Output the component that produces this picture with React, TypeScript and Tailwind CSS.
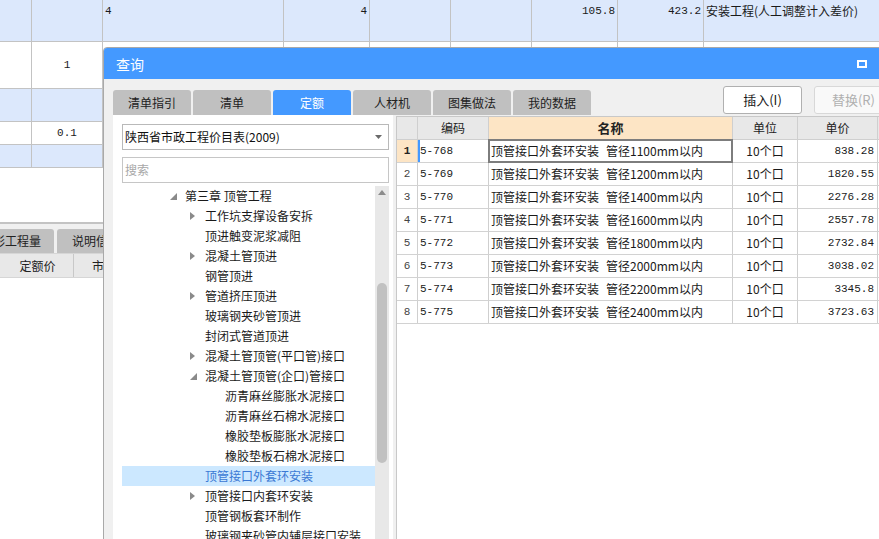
import React from 'react';

type Align = 'l' | 'r' | 'c';
type BgCell = { t?: string; a?: Align; mono?: boolean };

// background sheet column widths (border included)
const BG_COLS = [
  'w-[32px]',
  'w-[71px]',
  'w-[181px]',
  'w-[86px]',
  'w-[81px]',
  'w-[81px]',
  'w-[86px]',
  'w-[86px]',
  'flex-1',
];

const BG_ROWS: { h: string; blue: boolean; top?: boolean; cells: BgCell[] }[] = [
  {
    h: 'h-[42px]',
    blue: true,
    top: true,
    cells: [
      {},
      {},
      { t: '4', a: 'l', mono: true },
      { t: '4', a: 'r', mono: true },
      {},
      {},
      { t: '105.8', a: 'r', mono: true },
      { t: '423.2', a: 'r', mono: true },
      { t: '安装工程(人工调整计入差价)', a: 'l' },
    ],
  },
  { h: 'h-[47px]', blue: false, cells: [{}, { t: '1', a: 'c', mono: true }] },
  { h: 'h-[33px]', blue: true, cells: [{}, {}] },
  { h: 'h-[23px]', blue: false, cells: [{}, { t: '0.1', a: 'c', mono: true }] },
  { h: 'h-[23px]', blue: true, cells: [{}, {}] },
];

const TABS = ['清单指引', '清单', '定额', '人材机', '图集做法', '我的数据'];

type Node = { label: string; level: 0 | 1 | 2; icon?: 'open' | 'closed'; selected?: boolean };

const TREE: Node[] = [
  { label: '第三章 顶管工程', level: 0, icon: 'open' },
  { label: '工作坑支撑设备安拆', level: 1, icon: 'closed' },
  { label: '顶进触变泥浆减阻', level: 1 },
  { label: '混凝土管顶进', level: 1, icon: 'closed' },
  { label: '钢管顶进', level: 1 },
  { label: '管道挤压顶进', level: 1, icon: 'closed' },
  { label: '玻璃钢夹砂管顶进', level: 1 },
  { label: '封闭式管道顶进', level: 1 },
  { label: '混凝土管顶管(平口管)接口', level: 1, icon: 'closed' },
  { label: '混凝土管顶管(企口)管接口', level: 1, icon: 'open' },
  { label: '沥青麻丝膨胀水泥接口', level: 2 },
  { label: '沥青麻丝石棉水泥接口', level: 2 },
  { label: '橡胶垫板膨胀水泥接口', level: 2 },
  { label: '橡胶垫板石棉水泥接口', level: 2 },
  { label: '顶管接口外套环安装', level: 1, selected: true },
  { label: '顶管接口内套环安装', level: 1, icon: 'closed' },
  { label: '顶管钢板套环制作', level: 1 },
  { label: '玻璃钢夹砂管内辅层接口安装', level: 1 },
];

const INDENT = ['pl-[48px]', 'pl-[68px]', 'pl-[88px]'];

const ROWS = [
  ['5-768', '1100', '838.28'],
  ['5-769', '1200', '1820.55'],
  ['5-770', '1400', '2276.28'],
  ['5-771', '1600', '2557.78'],
  ['5-772', '1800', '2732.84'],
  ['5-773', '2000', '3038.02'],
  ['5-774', '2200', '3345.8'],
  ['5-775', '2400', '3723.63'],
];

const MONO = "font-['Liberation_Mono',monospace] text-[11px]";

function Sheet() {
  return (
    <div className="flex flex-col">
      {BG_ROWS.map((row, ri) => (
        <div key={ri} className={`flex ${row.h} ${row.blue ? 'bg-[#dce8fc]' : 'bg-white'}`}>
          {BG_COLS.map((w, ci) => {
            const c = row.cells[ci];
            const show = c && c.t;
            return (
              <div
                key={ci}
                className={`${w} shrink-0 border-r border-b border-[#c3c3c3] flex ${
                  row.top ? 'items-start pt-[4px]' : 'items-center'
                } ${c?.a === 'r' ? 'justify-end pr-[2px]' : c?.a === 'c' ? 'justify-center' : 'pl-[2px]'} ${
                  ci === 8 ? 'border-r-0' : ''
                }`}
              >
                {show && (
                  <span className={`${c.mono ? MONO : 'text-[12px]'} leading-[14px] text-[#1a1a1a] whitespace-nowrap`}>
                    {c.t}
                  </span>
                )}
              </div>
            );
          })}
        </div>
      ))}
      <div className="h-[54px] bg-white" />
      <div className="h-[2px] bg-[#c3c3c3]" />
      <div className="h-[5px] bg-[#f0f0f0]" />
      <div className="flex h-[24px] bg-[#f0f0f0]">
        <div className="w-[54px] overflow-hidden flex justify-end items-center pr-[13px] bg-[#c0c0c0] rounded-tr-[3px]">
          <span className="text-[12px] whitespace-nowrap text-[#222]">反查图形工程量</span>
        </div>
        <div className="ml-[3px] w-[110px] flex items-center pl-[15px] bg-[#c0c0c0] rounded-t-[3px]">
          <span className="text-[12px] whitespace-nowrap text-[#222]">说明信息</span>
        </div>
      </div>
      <div className="flex h-[25px] bg-[#e8e8e8] border-t border-[#d6d6d6] border-b">
        <div className="w-[74px] border-r border-[#c8c8c8] flex items-center justify-center pl-[2px]">
          <span className="text-[12px] text-[#222]">定额价</span>
        </div>
        <div className="flex items-center pl-[18px]">
          <span className="text-[12px] text-[#222]">市场价</span>
        </div>
      </div>
    </div>
  );
}

function Tri({ kind }: { kind?: 'open' | 'closed' }) {
  if (kind === 'closed')
    return (
      <svg width="5" height="8" viewBox="0 0 5 8">
        <path d="M0 0 L5 4 L0 8 Z" fill="#8a8a8a" />
      </svg>
    );
  if (kind === 'open')
    return (
      <svg width="7" height="7" viewBox="0 0 7 7">
        <path d="M7 0 L7 7 L0 7 Z" fill="#8a8a8a" />
      </svg>
    );
  return null;
}

function TreePanel() {
  return (
    <div className="w-[280px] shrink-0 bg-white flex flex-col pl-[9px] pr-[4px] pt-[9px]">
      <div className="h-[26px] border border-[#b9b9b9] flex items-center pl-[2px] pr-[6px]">
        <span className="text-[12px] text-[#111] leading-[16px] whitespace-nowrap">陕西省市政工程价目表(2009)</span>
        <svg className="ml-auto" width="7" height="4" viewBox="0 0 7 4">
          <path d="M0 0 L7 0 L3.5 4 Z" fill="#6a6a6a" />
        </svg>
      </div>
      <div className="mt-[7px] h-[26px] border border-[#c6c6c6] flex items-center pl-[2px]">
        <span className="text-[12px] text-[#a8a8a8] leading-[16px]">搜索</span>
      </div>
      <div className="mt-[3px] flex flex-1">
        <div className="flex-1 flex flex-col">
          {TREE.map((n, i) => (
            <div
              key={i}
              className={`h-[20px] shrink-0 flex items-center ${INDENT[n.level]} ${n.selected ? 'bg-[#cce8ff]' : ''}`}
            >
              <div className="w-[15px] shrink-0 flex items-center">
                <Tri kind={n.icon} />
              </div>
              <span
                className={`text-[12px] leading-[14px] whitespace-nowrap ${
                  n.selected ? 'text-[#3a78d4]' : 'text-[#1a1a1a]'
                }`}
              >
                {n.label}
              </span>
            </div>
          ))}
        </div>
        <div className="w-[14px] shrink-0 bg-[#e8e8e8] flex flex-col items-center pt-[4px]">
          <svg width="8" height="5" viewBox="0 0 8 5">
            <path d="M0 5 L4 0 L8 5 Z" fill="#8c8c8c" />
          </svg>
          <div className="mt-[88px] w-[10px] h-[180px] rounded-full bg-[#c1c1c1]" />
        </div>
      </div>
    </div>
  );
}

function QuotaTable() {
  return (
    <div className="flex-1 mt-[1px] bg-white border-l border-t border-[#c8c8c8] flex flex-col">
      <div className="flex h-[23px] border-b border-[#cfcfcf] bg-[#e8e8e8] text-[12px] text-[#222]">
        <div className="w-[21px] border-r border-[#cfcfcf]" />
        <div className="w-[71px] border-r border-[#cfcfcf] flex items-center justify-center">编码</div>
        <div className="w-[244px] border-r border-[#cfcfcf] flex items-center justify-center bg-[#fde5c5] font-bold text-[13px]">
          名称
        </div>
        <div className="w-[65px] border-r border-[#cfcfcf] flex items-center justify-center">单位</div>
        <div className="w-[80px] border-r border-[#cfcfcf] flex items-center justify-center">单价</div>
      </div>
      {ROWS.map(([code, size, price], i) => (
        <div key={code} className="flex h-[23px] border-b border-[#d2d2d2] text-[#1a1a1a]">
          <div
            className={`w-[21px] border-r border-[#cfcfcf] flex items-center justify-center ${MONO} ${
              i === 0 ? 'bg-[#fde5c5] font-bold text-[#222]' : 'text-[#444]'
            }`}
          >
            {i + 1}
          </div>
          <div
            className={`w-[71px] border-r border-[#cfcfcf] flex items-center pl-[2px] ${MONO} ${
              i === 0 ? 'shadow-[inset_2px_0_0_#4499ff]' : ''
            }`}
          >
            {code}
          </div>
          <div className="relative w-[244px] border-r border-[#cfcfcf] flex items-center pl-[2px] text-[12px] whitespace-nowrap">
            <span>顶管接口外套环安装</span>
            <span className="ml-[7px]">管径{size}mm以内</span>
            {i === 0 && <div className="absolute -left-px -top-px -right-px -bottom-px border-2 border-[#7d7d7d]" />}
          </div>
          <div className="w-[65px] border-r border-[#cfcfcf] flex items-center justify-center text-[12px]">10个口</div>
          <div className={`w-[80px] border-r border-[#cfcfcf] flex items-center justify-end pr-[3px] ${MONO}`}>
            {price}
          </div>
        </div>
      ))}
    </div>
  );
}

function QueryDialog() {
  return (
    <div className="absolute left-[103px] top-[47px] w-[800px] h-[520px] border border-[#a9a9a9] rounded-t-[4px] bg-[#f0f0f0] flex flex-col overflow-hidden">
      <div className="h-[31px] shrink-0 bg-[#4499ff] flex items-center pl-[12px] pr-[35px]">
        <span className="text-[14px] text-white leading-[16px]">查询</span>
        <div className="ml-auto w-[10px] h-[8px] border-2 border-white" />
      </div>
      <div className="h-[36px] shrink-0 flex items-end pl-[9px] pr-[9px]">
        <div className="flex gap-[2px]">
          {TABS.map((t) => (
            <div
              key={t}
              className={`w-[78px] h-[25px] rounded-t-[3px] flex items-center justify-center text-[12px] ${
                t === '定额' ? 'bg-[#4499ff] text-white' : 'bg-[#c0c0c0] text-[#222]'
              }`}
            >
              {t}
            </div>
          ))}
        </div>
        <div className="ml-auto self-start mt-[7px] flex gap-[12px]">
          <div className="w-[79px] h-[28px] rounded-[3px] border border-[#b0b0b0] bg-white flex items-center justify-center text-[13px] text-[#1a1a1a]">
            插入(I)
          </div>
          <div className="w-[79px] h-[28px] rounded-[3px] border border-[#d8d8d8] bg-[#f9f9f9] flex items-center justify-center text-[13px] text-[#b0b0b0]">
            替换(R)
          </div>
        </div>
      </div>
      <div className="flex flex-1 pl-[9px]">
        <TreePanel />
        <div className="w-[3px] shrink-0" />
        <QuotaTable />
      </div>
    </div>
  );
}

export default function App() {
  return (
    <div className="relative w-[879px] h-[539px] overflow-hidden bg-white font-['Noto_Sans_CJK_SC','Microsoft_YaHei',sans-serif]">
      <Sheet />
      <QueryDialog />
    </div>
  );
}
